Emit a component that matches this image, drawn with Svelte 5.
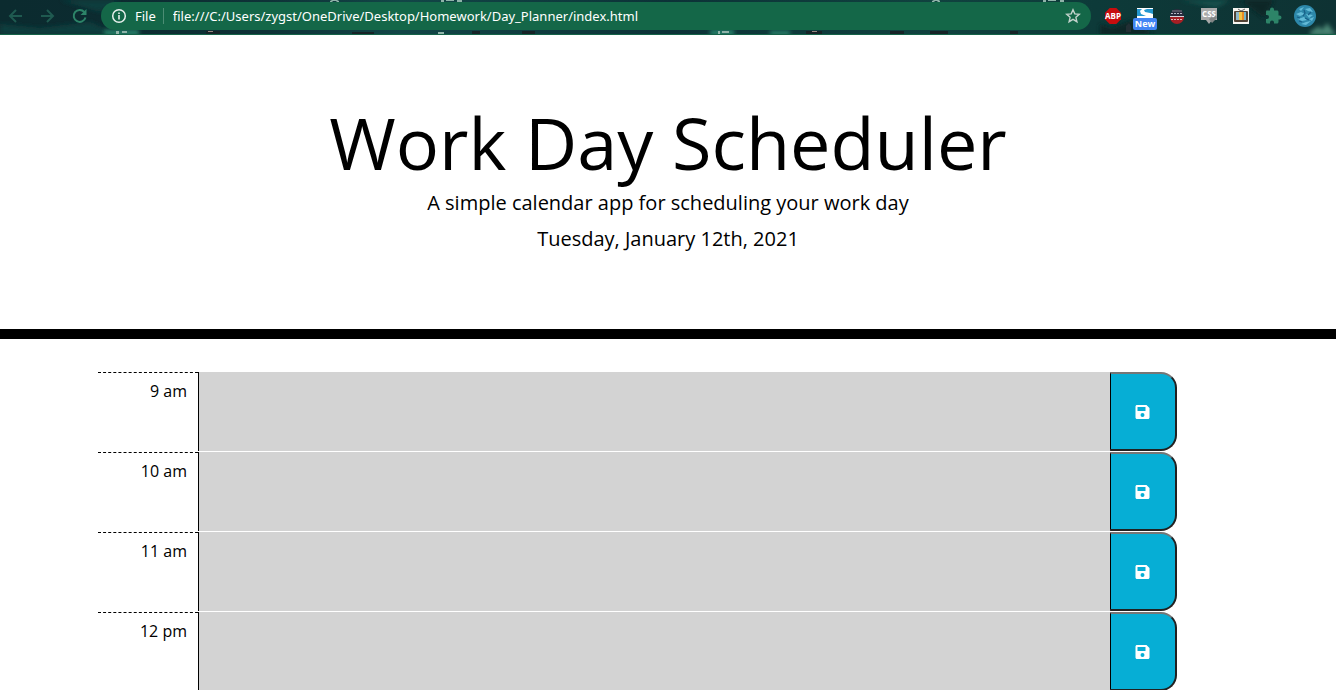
<script>
  const hours = ['9 am', '10 am', '11 am', '12 pm'];
  let notes = $state(hours.map(() => ''));
  let url = $state('file:///C:/Users/zygst/OneDrive/Desktop/Homework/Day_Planner/index.html');
</script>

<div class="window">
  <nav class="toolbar" aria-label="Browser toolbar">
    <svg class="scene" viewBox="0 0 1336 35" preserveAspectRatio="none" aria-hidden="true">
      <defs>
        <linearGradient id="night" x1="0" x2="1" y1="0" y2="0">
          <stop offset="0" stop-color="#0b2b2f" />
          <stop offset=".09" stop-color="#0c2b30" />
          <stop offset=".2" stop-color="#0e3237" />
          <stop offset=".3" stop-color="#124647" />
          <stop offset=".5" stop-color="#0c3237" />
          <stop offset=".7" stop-color="#10423f" />
          <stop offset=".82" stop-color="#0d3a39" />
          <stop offset="1" stop-color="#0e3233" />
        </linearGradient>
        <filter id="soft"><feGaussianBlur stdDeviation="2" /></filter>
      </defs>
      <rect width="1336" height="35" fill="url(#night)" />
      <g filter="url(#soft)">
        <path d="M0 24l40 4 50-6 30 13H0zM60 0h60l-20 12z" fill="#103c3d" />
        <path d="M105 30h34v5h-34zM710 30h24v5h-24zM770 31h20v4h-20z" fill="#2c8a70" />
        <path d="M1100 24l12 4 20-8 22 15h-54zM1240 0h34l-10 18z" fill="#0a2728" />
        <path d="M1310 32l9-6 3 4 5-7 9 12h-26z" fill="#4a8573" />
        <path d="M1180 0h50l-14 8z" fill="#17504b" />
      </g>
      <path d="M116 31h3v3h-3zM122 31h5v2h-5zM438 32h6v2h-6zM718 31h2v3h-2zM722 31h7v2h-7zM330 1l2-1h5l2 1v1h-2l-1-1h-3l-1 1h-2zM932 1l2-1h5l1 1v1h-2l-1-1h-2l-1 1h-2zM441 0h3v2h-3zM446 0h8v1h-8zM457 0h5v2h-5zM1043 0h3v2h-3zM1048 0h8v1h-8zM1060 0h4v2h-4z" fill="#8fb3a9" />
      <path d="M206 31h14v3h-14zM522 31h13v3h-13zM806 31h16v3h-16zM472 31h8v3h-8zM352 32h22v2h-22zM890 31h14v3h-14zM930 31h18v3h-18zM1010 31h8v3h-8z" fill="#172327" />
      <path d="M208 31h5v1h-5zM812 31h5v1h-5z" fill="#9a8580" />
      <path d="M1126 32v-6l3-3 2 3v6z" fill="#222f34" />
      <rect y="34" width="1336" height="1" fill="#156348" />
    </svg>
    <button class="nav" aria-label="Back">
      <svg viewBox="0 0 16 16"><path d="M14 8H2M8 2L2 8l6 6" fill="none" stroke="#1f5a50" stroke-width="2" /></svg>
    </button>
    <button class="nav" aria-label="Forward">
      <svg viewBox="0 0 16 16"><path d="M1 8h12M7 2l6 6-6 6" fill="none" stroke="#1f5a50" stroke-width="2" /></svg>
    </button>
    <button class="nav" aria-label="Reload">
      <svg viewBox="0 0 16 16"><path d="M13.500 9.500A6 6 0 1 1 12.300 4" fill="none" stroke="#2d8468" stroke-width="2" /><path d="M14.500 1v6h-6z" fill="#2d8468" /></svg>
    </button>
    <div class="address">
      <svg class="info" viewBox="0 0 16 16" aria-hidden="true"><circle cx="8" cy="8" r="6.300" fill="none" stroke="#e8f0ed" stroke-width="1.500" /><path d="M7.200 7h1.600v4.500H7.200zM7.200 4.400h1.600V6H7.200z" fill="#e8f0ed" /></svg>
      <span class="scheme">File</span>
      <input class="url" type="text" aria-label="Address" bind:value={url} spellcheck="false" />
      <button class="star" aria-label="Bookmark this page">
        <svg viewBox="0 0 16 16"><path d="M8 1.800l1.800 4.100 4.500.4-3.400 3 1 4.400L8 11.400l-3.900 2.300 1-4.400-3.400-3 4.500-.4z" fill="none" stroke="#c3d3cc" stroke-width="1.400" /></svg>
      </button>
    </div>
    <div class="extensions">
      <button aria-label="Ad blocker">
        <svg viewBox="0 0 24 24"><path d="M8.700 4h6.600L20 8.700v6.600L15.300 20H8.700L4 15.300V8.700z" fill="#c70d0e" /><text x="12" y="15" text-anchor="middle" class="abp">ABP</text></svg>
      </button>
      <button aria-label="Screen tool">
        <svg viewBox="0 0 24 24"><rect x="4" y="4" width="16" height="16" fill="#fff" /><path d="M4 5h5l-2 2 1 3 5 2H4zM20 5v5l-3-1-5-1-1-2 3-1z" fill="#2497ce" /></svg>
        <span class="badge">New</span>
      </button>
      <button aria-label="Flag filter">
        <svg viewBox="0 0 24 24"><circle cx="12" cy="12" r="7" fill="#292c3d" /><path d="M5 13h14a7 7 0 0 1-14 0z" fill="#a51f24" /><path d="M7 7h10" stroke="#7d7784" stroke-width="1" /><path d="M6 9.500h12" stroke="#b4b6c2" stroke-width="1" stroke-dasharray="2 1" /><path d="M5 12.500h14" stroke="#d5d5dc" /><path d="M6 15.500h12" stroke="#e5b8b8" stroke-dasharray="2 1" /></svg>
      </button>
      <button aria-label="CSS viewer">
        <svg viewBox="0 0 24 24"><path d="M4 4h16v12h-5l-3 4-3-4H4z" fill="#a9aaaa" /><text x="12" y="13" text-anchor="middle" class="css">CSS</text><path d="M12 15l3-2 1 1 3-3 1 3-5 5z" fill="#828686" /></svg>
      </button>
      <button aria-label="TV">
        <svg viewBox="0 0 24 24"><rect x="4" y="4" width="16" height="16" fill="#f6f5f0" /><path d="M9 5l3 2 4-2" fill="none" stroke="#666" /><rect x="5" y="7" width="14" height="11" rx="1" fill="#514335" /><path d="M7 8h3v8H7z" fill="#8fb9c8" /><path d="M10 8h3v8h-3z" fill="#f1c445" /><path d="M13 8h2v8h-2z" fill="#e88c24" /><path d="M15 8h2v8h-2z" fill="#73b4c9" /></svg>
      </button>
      <button aria-label="Extensions">
        <svg viewBox="0 0 24 24"><path d="M18.500 11.500h-1V8c0-.8-.7-1.500-1.500-1.500h-3v-1a2 2 0 0 0-4 0v1H6C5.200 6.500 5 7.200 5 8v3h1a2 2 0 0 1 0 4H5v3c0 .8.500 1.500 1.300 1.500H9v-1a2 2 0 0 1 4 0v1h3c.8 0 1.500-.7 1.500-1.500v-2.500h1a2 2 0 0 0 0-4z" fill="#2d8468" /></svg>
      </button>
      <button aria-label="Profile">
        <svg viewBox="0 0 24 24"><circle cx="12" cy="12" r="11" fill="#2d88aa" /><path d="M6 5l5-2-3 4zM12 5l5-1 3 4-5-1zM3 10l5-2 4 2-5 2zM13 10l7 1-4 3zM5 15l6-2 3 3-5 1zM8 20l5-2 5-1-5 4zM16 15l5-2-2 4z" fill="#63bbd7" /><path d="M11 6l1 3-2 3M18 8l-3 3M4 13l3 1M12 14l4 2M9 18l-3-1" fill="none" stroke="#175f87" stroke-width="1.200" /></svg>
      </button>
    </div>
  </nav>

  <header>
    <h1>Work Day Scheduler</h1>
    <p>A simple calendar app for scheduling your work day</p>
    <p>Tuesday, January 12th, 2021</p>
  </header>

  <main>
    {#each hours as hour, i}
      <div class="row">
        <label for="note-{i}">{hour}</label>
        <textarea id="note-{i}" bind:value={notes[i]}></textarea>
        <button class="save" aria-label="Save {hour}">
          <svg viewBox="0 0 14 14"><path fill-rule="evenodd" d="M1.500 0H11l3 3v9.500c0 .8-.7 1.500-1.500 1.500h-11C.7 14 0 13.300 0 12.500v-11C0 .7.7 0 1.500 0zM2 2v4h8V2zM7 8a2 2 0 1 0 0 4 2 2 0 0 0 0-4z" fill="#fff" /></svg>
        </button>
      </div>
    {/each}
  </main>
</div>

<style>
  :global(body) { margin: 0; background: #fff; }
  .window {
    height: 100vh;
    overflow: hidden;
    display: flex;
    flex-direction: column;
    font-family: "Open Sans", sans-serif;
    font-size: 16px;
    font-weight: 400;
    line-height: 24px;
    color: #000;
  }
  button { padding: 0; border: 0; background: none; }
  .toolbar {
    position: relative;
    flex: none;
    display: flex;
    align-items: center;
    height: 32px;
    padding: 0 19px 3px 0;
  }
  .scene { position: absolute; inset: 0; width: 100%; height: 100%; }
  .nav { position: relative; width: 32px; height: 32px; }
  .nav svg, .star svg { display: block; width: 16px; height: 16px; margin: auto; }
  .save svg { display: block; width: 15px; height: 14px; margin: auto; }
  .address {
    position: relative;
    flex: 1;
    display: flex;
    align-items: center;
    height: 28px;
    margin: 0 10px 0 5px;
    padding: 0 10px;
    border-radius: 14px;
    background: #146748;
    color: #fff;
    font-family: "Noto Sans", sans-serif;
    font-size: 13px;
    line-height: 16px;
  }
  .info { width: 16px; height: 16px; }
  .scheme { margin-left: 8px; padding-right: 7px; border-right: 1px solid #4c8d74; }
  .url {
    flex: 1;
    min-width: 0;
    padding: 0 0 0 9px;
    border: 0;
    outline: 0;
    background: none;
    color: #fff;
    font: inherit;
  }
  .extensions { position: relative; display: flex; gap: 8px; }
  .extensions button { position: relative; width: 24px; height: 24px; }
  .extensions svg { display: block; width: 24px; height: 24px; }
  .abp { font: 700 8px "Open Sans", sans-serif; fill: #fff; }
  .css { font: 700 8px "Open Sans", sans-serif; fill: #fff; }
  .badge {
    position: absolute;
    left: 0;
    top: 14px;
    width: 24px;
    border-radius: 2px;
    background: #4285f4;
    color: #fff;
    font: 700 9px/12px "Open Sans", sans-serif;
    text-align: center;
  }
  header {
    flex: none;
    padding: 64px 24px 69px;
    border-bottom: 10px solid #000;
    text-align: center;
  }
  h1 { margin: 0 0 3px; font-size: 72px; font-weight: 400; line-height: 86px; }
  p { margin: 0 0 6px; font-size: 20px; line-height: 30px; }
  main { width: 1140px; max-width: 100%; margin: 0 auto; padding-top: 33px; }
  .row {
    display: grid;
    grid-template-columns: 100px 1fr 67px;
    height: 80px;
    margin-right: 61px;
  }
  label {
    padding: 6px 11px 0 0;
    border-top: 1px dashed #000;
    text-align: right;
  }
  textarea {
    height: 79px;
    box-sizing: border-box;
    border: 0;
    border-left: 1px solid #000;
    outline: 0;
    resize: none;
    background: #d3d3d3;
    font: inherit;
  }
  .save {
    height: 79px;
    padding-right: 1px;
    border: 2px solid #212121;
    border-top-color: #767676;
    border-left: 1px solid #000;
    border-radius: 0 16px 16px 0;
    background: #06aed5;
  }
</style>
